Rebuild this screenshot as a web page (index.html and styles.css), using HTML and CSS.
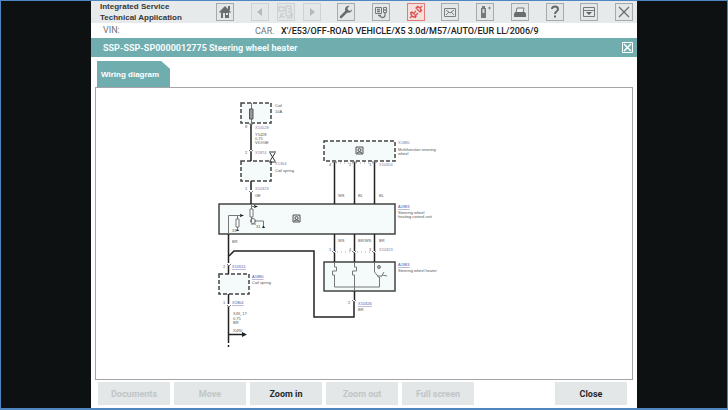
FILE: index.html
```html
<!DOCTYPE html>
<html lang="en">
<head>
<meta charset="UTF-8">
<meta name="viewport" content="width=device-width, initial-scale=1.0">
<title>Integrated Service Technical Application</title>
<link rel="stylesheet" href="styles.css">
</head>
<body>
<div class="app">
    <header class="toolbar">
        <h1 class="app-name">Integrated Service<br>Technical Application</h1>
        <nav class="tools">
            <button class="tool" aria-label="Home">
                <svg viewBox="0 0 16 16"><path d="M2 8 8 2l6 6-1 1-1-1v6H4V8L3 9z" fill="#686d6f"/><path d="M11 2h2v4h-2z" fill="#686d6f"/><path d="M6 9h2v5H6zM9 9h2v2H9z" fill="#dfe3e4"/></svg>
            </button>
            <div class="tool-group">
                <button class="tool off" aria-label="Back" disabled>
                    <svg viewBox="0 0 16 16"><path d="M10 4v8L5 8z" fill="#b4b9bb"/></svg>
                </button>
                <button class="tool off" aria-label="Pages" disabled>
                    <svg viewBox="0 0 16 16" fill="none" stroke="#c0c5c7"><path d="M1 3h5v4H1zM8 2h5v10H8zM3 9v4h4M10 5h2M10 8h2M1 14l5-5M14 9v5H9"/></svg>
                </button>
                <button class="tool off" aria-label="Forward" disabled>
                    <svg viewBox="0 0 16 16"><path d="M6 4v8l5-4z" fill="#b4b9bb"/></svg>
                </button>
            </div>
            <button class="tool" aria-label="Service">
                <svg viewBox="0 0 16 16"><path d="m3 13 6-6" stroke="#686d6f" stroke-width="2.500" stroke-linecap="round"/><path d="M11.500 2A3.500 3.500 0 1 0 14 5.500L12 7l-2-1-.5-2z" fill="#686d6f"/></svg>
            </button>
            <button class="tool" aria-label="Devices">
                <svg viewBox="0 0 16 16" fill="none" stroke="#74797b"><path d="M2.500 3.500h6v6h-6zM10.500 3.500h3v5h-3z"/><path d="M4 5.500h3M4 7.500h3M12 5v2M5 11.500h3M12 8v3q0 2.500-2.500 2.500T7 11" stroke-width="1.300"/></svg>
            </button>
            <button class="tool alert" aria-label="Connection">
                <svg viewBox="0 0 16 16" fill="none" stroke="#d9534f" stroke-width="1.200"><path d="m2 14 2-2M14 2l-2 2M4 8l4 4q-2 2-4 0t0-4zM8 4l4 4q2-2 0-4t-4 0zM6 9l2-2M8 11l2-2"/><path d="m9 3 1-1M13 7l1-1M2 9l2-1M7 14l1-2"/></svg>
            </button>
            <button class="tool" aria-label="Messages">
                <svg viewBox="0 0 16 16" fill="none" stroke="#7a7f81"><path d="M2.500 4.500h11v8h-11zM4 6l4 3 4-3M4 11l3-3M12 11 9 8"/></svg>
            </button>
            <button class="tool" aria-label="Battery">
                <svg viewBox="0 0 16 16"><path d="M5 2h3v2h1v10H4V4h1z" fill="#74797b"/><path d="M5.500 5h2v4h-2z" fill="#d4d8d9"/><path d="M11 4h3M12.500 2.500v3" stroke="#8a8f91"/></svg>
            </button>
            <button class="tool" aria-label="Print">
                <svg viewBox="0 0 16 16"><path d="M5 4h7l-1 5H4z" fill="#eef0f0" stroke="#74797b"/><path d="M3 8h10l1 2v3H2v-3z" fill="#686d6f"/></svg>
            </button>
            <button class="tool" aria-label="Help">
                <svg viewBox="0 0 16 16" fill="none" stroke="#63686a" stroke-width="2"><path d="M5 5q0-2.500 3-2.500T11 5q0 1.500-1.500 2.500T8 10M8 11.500v2"/></svg>
            </button>
            <button class="tool" aria-label="Minimise">
                <svg viewBox="0 0 16 16"><path d="M2.500 3.500h11v9h-11zM3 6.500h10" fill="none" stroke="#74797b"/><path d="M5 8h6l-3 3z" fill="#5f6466"/></svg>
            </button>
            <button class="tool" aria-label="Exit">
                <svg viewBox="0 0 16 16"><path d="m3 3 10 10M13 3 3 13" stroke="#686d6f" stroke-width="1.300"/></svg>
            </button>
        </nav>
    </header>

    <div class="vehicle">
        <span class="vin">VIN:</span>
        <span class="car">CAR.</span>
        <span class="model">X'/E53/OFF-ROAD VEHICLE/X5 3.0d/M57/AUTO/EUR LL/2006/9</span>
    </div>

    <div class="doc-bar">
        <h2 class="doc-title">SSP-SSP-SP0000012775 Steering wheel heater</h2>
        <button class="doc-close" aria-label="Close document">
            <svg viewBox="0 0 11 11" fill="none" stroke="#fff"><path d="M.5.5h10v10H.5z"/><path d="m2 2 7 7M9 2 2 9" stroke-width="1.500"/></svg>
        </button>
    </div>

    <div class="tabs">
        <button class="tab">Wiring diagram</button>
    </div>

    <main class="panel">
        <svg class="diagram" viewBox="96 88 536 291" preserveAspectRatio="xMinYMin meet" role="img" aria-label="Wiring diagram of the steering wheel heater">
            <!-- fuse carrier and coil spring -->
            <g class="part dashed">
                <path d="M241 103h30v20h-30zM241 161h30v20h-30zM219 274h30v20h-30zM324 141h71v20h-71z"/>
            </g>
            <!-- control unit and heater -->
            <g class="part">
                <path d="M219 204h176v30H219zM324 262h71v29h-71z"/>
            </g>

            <g class="wire">
                <path d="M251 124v26M251 152v9M251 181v9M251 193v11"/>
                <path d="M334.500 162v42M354.500 162v42M374.500 162v42"/>
                <path d="M334.500 234v17M354.500 234v17M374.500 234v17M334.500 253v9M354.500 253v9M374.500 253v9"/>
                <path d="M228.500 234v29M228.500 265v9M228.500 294v10M228.500 306v37M228.500 345v2"/>
                <path d="M229 256l5-5h80v66h40v-15M354.500 291v9M229 334.500h14"/>
            </g>
            <g class="joint">
                <path d="M249 150l2 2 2-2M249 191l2 2 2-2M227 264l2 2 2-2M227 305l2 2 2-2M332 251l2 2 2-2M352 251l2 2 2-2M372 251l2 2 2-2M352 300l2 2 2-2M249 124h4M332 162h5M352 162h5M372 162h5"/>
            </g>
            <path class="arrow" d="m242 332 5 2.500-5 2.500zM240 214l4 1.500-4 1.500zM254 205l4 1.500-4 1.500zM236 231l1.500-3 1.500 3zM262 228l1.500-3 1.500 3z"/>

            <!-- inner circuits -->
            <g class="thin">
                <path d="M251.500 103v21M228.500 234v-18.500h12M237.500 216v14M251.500 204v18M252 206.500h3M254 221h9.500v5M251 224h5"/>
                <path d="M334.500 262v5h2v4h-4v4h2v12h45v-10M354.500 262v5h2v4h-4v4h2v16M374.500 262v10l5 6M379 269v-4M377 276h4M382 275l5 1M381 277l3-5"/>
                <path d="M236 219h3v8h-3zM250 209h3v8h-3z" class="coil"/>
                <circle cx="253" cy="221" r="2.500"/><circle cx="379" cy="267" r="1.500"/>
                <path class="link" d="M337 252h35M336 163h40"/>
            </g>
            <path class="fuse" d="M249.500 109h3.500v10h-3.500z"/>

            <!-- module symbols -->
            <g class="chip">
                <path d="M356 147h7v7h-7zM293 215h7v7h-7z"/>
                <circle cx="359.500" cy="150" r="1.500"/><circle cx="296.500" cy="218" r="1.500"/>
                <path d="M357 153l2-1h1l2 1M294 221l2-1h1l2 1"/>
            </g>
            <path class="cursor" d="M269 152h7M269 162h7M270 153l5 8M275 153l-5 8"/>

            <g class="note">
                <text x="275" y="107">Coil</text>
                <text x="275" y="113">10A</text>
                <text x="255" y="136">Y5428</text>
                <text x="255" y="140">0,75</text>
                <text x="255" y="144">VIO/GE</text>
                <text x="275" y="172">Coil spring</text>
                <text x="255" y="197">GE</text>
                <text x="398" y="151">Multifunction steering</text>
                <text x="398" y="155">wheel</text>
                <text x="398" y="214">Steering wheel</text>
                <text x="398" y="218">heating control unit</text>
                <text x="398" y="272">Steering wheel heater</text>
                <text x="252" y="284">Coil spring</text>
                <text x="338" y="197">WS</text>
                <text x="358" y="197">BL</text>
                <text x="379" y="197">BL</text>
                <text x="338" y="242">WS</text>
                <text x="358" y="242">BR/WS</text>
                <text x="379" y="242">BR</text>
                <text x="232" y="243">BR</text>
                <text x="358" y="311">BR</text>
                <text x="233" y="315">X49_17</text>
                <text x="233" y="320">0,75</text>
                <text x="233" y="324">BR</text>
                <text x="233" y="332">X490</text>
                <text x="245" y="128">8</text>
                <text x="245" y="154">2</text>
                <text x="245" y="190">1</text>
                <text x="223" y="268">2</text>
                <text x="223" y="304">1</text>
                <text x="329" y="166">4</text>
                <text x="349" y="166">2</text>
                <text x="369" y="166">1</text>
                <text x="329" y="251">1</text>
                <text x="349" y="251">4</text>
                <text x="369" y="251">3</text>
                <text x="348" y="304">2</text>
                <text x="232" y="232">31</text>
                <text x="256" y="228">31</text>
            </g>
            <g class="ref">
                <text x="255" y="129">X10528</text>
                <text x="255" y="154">X1874</text>
                <text x="275" y="165">X1304</text>
                <text x="255" y="190">X10323</text>
                <text x="398" y="144">X1880</text>
                <text x="379" y="166">X10304</text>
                <text x="379" y="251">X10323</text>
            </g>
            <g class="ref strong">
                <text x="398" y="208">A1883</text>
                <text x="398" y="266">A1883</text>
                <text x="232" y="268">X10551</text>
                <text x="252" y="278">A1880</text>
                <text x="232" y="304">X1804</text>
                <text x="358" y="305">X10326</text>
            </g>
        </svg>
    </main>

    <footer class="actions">
        <button class="action" disabled>Documents</button>
        <button class="action" disabled>Move</button>
        <button class="action">Zoom in</button>
        <button class="action" disabled>Zoom out</button>
        <button class="action" disabled>Full screen</button>
        <button class="action last">Close</button>
    </footer>
</div>
</body>
</html>
```
FILE: styles.css
```css
* {
    box-sizing: border-box;
}
body {
    margin: 0;
    height: 100vh;
    border: 1px solid #4f86c0;
    border-bottom-width: 2px;
    background: #0e1112;
    font-family: "Liberation Sans", sans-serif;
    font-size: 8px;
    display: flex;
    justify-content: center;
}
button {
    font: inherit;
    border: 0;
    padding: 0;
    margin: 0;
}
.app {
    width: 75vw;
    background: #fff;
    display: flex;
    flex-direction: column;
}

/* top bar */
.toolbar {
    display: flex;
    height: 22px;
    background: #e7eaeb;
    padding-right: 4px;
}
.app-name {
    flex: 0 0 125px;
    margin: 0;
    padding-left: 9px;
    font-size: 8px;
    line-height: 11px;
    font-weight: 700;
    color: #33373a;
    white-space: nowrap;
}
.tools {
    flex: 1;
    display: flex;
    justify-content: space-between;
    align-items: center;
}
.tool-group {
    display: flex;
    gap: 8px;
}
.tool {
    width: 18px;
    height: 18px;
    border: 1px solid #a5aaac;
    background: #e3e7e8;
}
.tool svg {
    display: block;
}
.tool.off {
    border-color: #ced2d4;
}
.tool.alert {
    border-color: #df7b77;
    background: #f6dedd;
}

/* vehicle line */
.vehicle {
    display: flex;
    height: 11px;
    margin-bottom: 4px;
    padding-left: 12px;
    font-family: Roboto, sans-serif;
    font-size: 9px;
    line-height: 17px;
    color: #6f7375;
    white-space: nowrap;
    overflow: hidden;
}
.vin {
    width: 152px;
    line-height: 15px;
}
.car {
    width: 26px;
}
.model {
    color: #222;
    font-weight: 500;
}

/* document title */
.doc-bar {
    display: flex;
    align-items: center;
    justify-content: space-between;
    height: 19px;
    padding: 0 4px 0 12px;
    background: #70adaf;
}
.doc-title {
    margin: 0;
    font-family: Roboto, sans-serif;
    font-size: 9px;
    font-weight: 700;
    color: #f4fbfb;
}
.doc-close {
    width: 11px;
    height: 11px;
    background: none;
}
.doc-close svg {
    display: block;
}
.tabs {
    padding: 4px 6px 0;
    display: flex;
}
.tab {
    height: 26px;
    padding: 0 11px 0 4px;
    background: #70adaf;
    color: #fff;
    font-weight: 700;
    clip-path: polygon(0 0, calc(100% - 9px) 0, 100% 8px, 100% 100%, 0 100%);
}

/* diagram */
.panel {
    flex: 1;
    min-height: 0;
    margin: 0 4px;
    border: 1px solid #a3a3a8;
}
.diagram {
    display: block;
    width: 100%;
    height: 100%;
}
.part {
    fill: #f5fafb;
    stroke: #444;
    stroke-width: 1.5;
}
.part.dashed {
    stroke-dasharray: 4 2;
}
.wire {
    fill: none;
    stroke: #222;
    stroke-width: 1.5;
}
.joint,
.thin {
    fill: none;
    stroke: #777;
    stroke-width: 1;
}
.thin .link {
    stroke: #aaa;
    stroke-dasharray: 1 3;
}
.coil {
    fill: #fff;
}
.arrow {
    fill: #222;
}
.fuse {
    fill: #999;
    stroke: #555;
}
.chip {
    fill: #e4e8e8;
    stroke: #555;
}
.cursor {
    fill: none;
    stroke: #333;
}
.note,
.ref {
    font-size: 4px;
    fill: #555;
}
.ref {
    fill: #7c7ca8;
}
.strong {
    fill: #5454a8;
    text-decoration: underline;
}

/* bottom buttons */
.actions {
    display: flex;
    gap: 4px;
    padding: 2px 10px 3px 7px;
}
.action {
    flex: 0 0 72px;
    height: 23px;
    background: #e3e7e8;
    color: #26292b;
    font-family: Roboto, sans-serif;
    font-size: 9px;
    font-weight: 700;
}
.action:disabled {
    color: #c0c5c7;
}
.last {
    margin-left: auto;
}
```
